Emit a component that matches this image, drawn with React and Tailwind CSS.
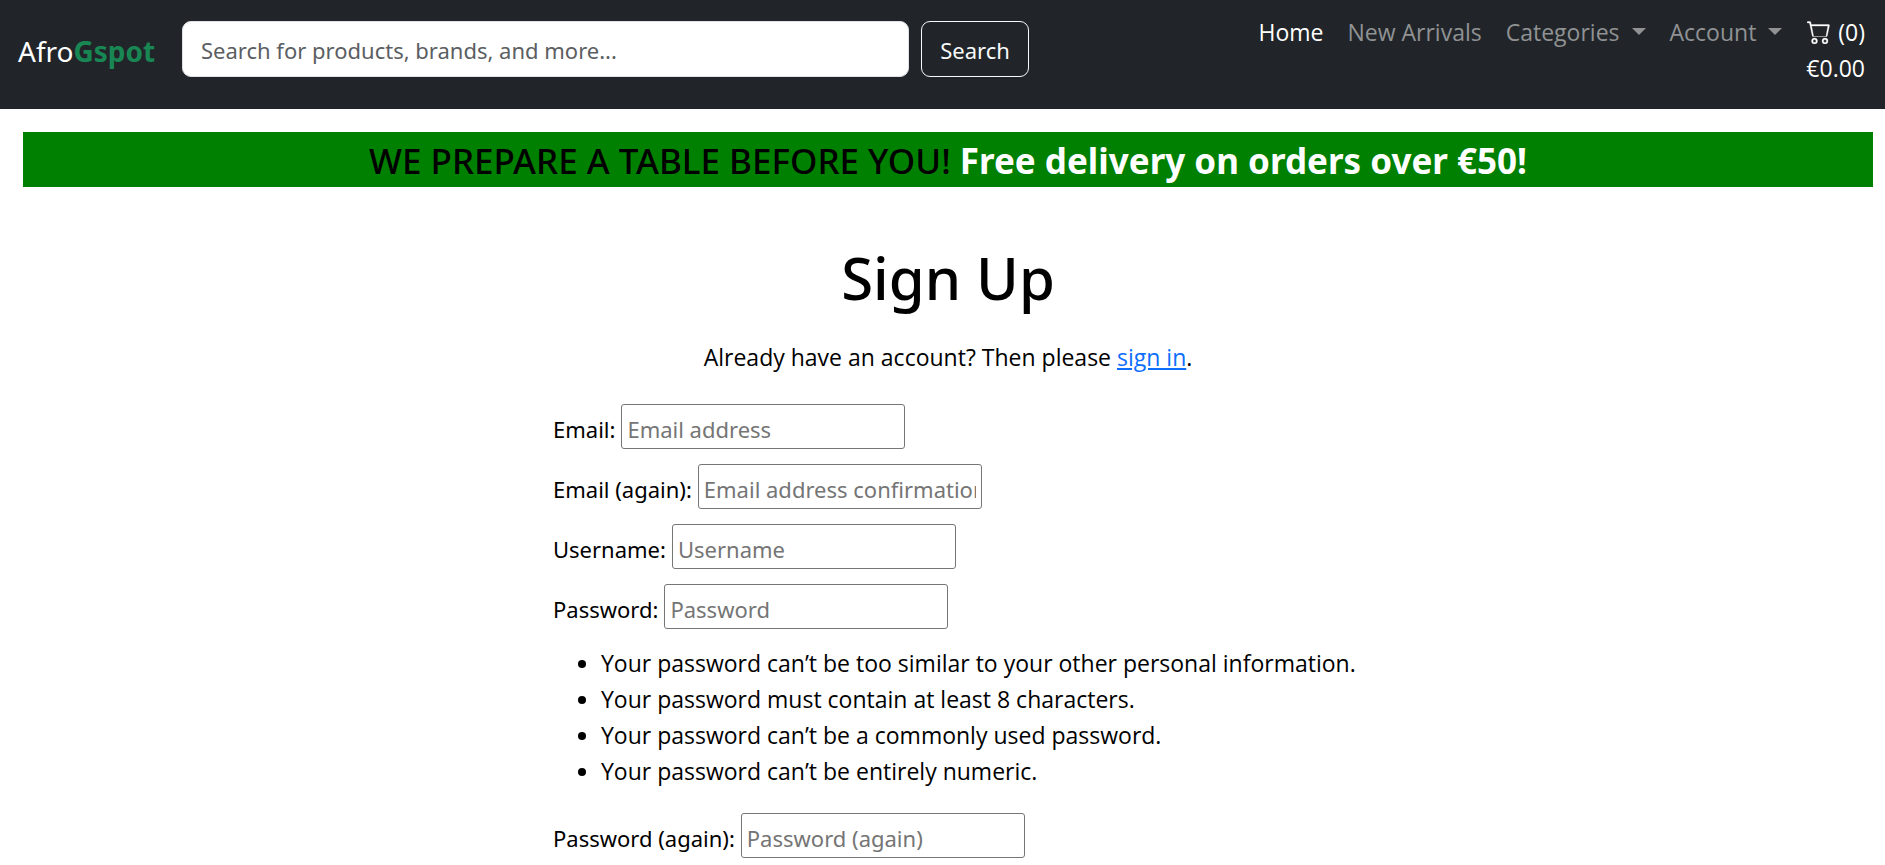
import React from "react";

const rules = [
  "Your password can’t be too similar to your other personal information.",
  "Your password must contain at least 8 characters.",
  "Your password can’t be a commonly used password.",
  "Your password can’t be entirely numeric.",
];

function Caret() {
  return (
    <svg className="mb-0.5 h-[7px] w-[14px]" viewBox="0 0 14 7" aria-hidden="true">
      <path d="M0 0h14L7 7z" fill="currentColor" />
    </svg>
  );
}

function CartIcon() {
  return (
    <svg className="size-6" viewBox="0 0 16 16" fill="currentColor" stroke="currentColor" strokeWidth="0.2" aria-hidden="true">
      <path d="M0 1.5A.5.5 0 0 1 .5 1H2a.5.5 0 0 1 .485.379L2.89 3H14.5a.5.5 0 0 1 .49.598l-1.5 7A.5.5 0 0 1 13 11H4a.5.5 0 0 1-.491-.408L2.01 3.607 1.61 2H.5a.5.5 0 0 1-.5-.5M3.102 4l1.313 7h8.17l1.313-7zM5 12a2 2 0 1 0 0 4 2 2 0 0 0 0-4m7 0a2 2 0 1 0 0 4 2 2 0 0 0 0-4m-7 1a1 1 0 1 1 0 2 1 1 0 0 1 0-2m7 0a1 1 0 1 1 0 2 1 1 0 0 1 0-2" />
    </svg>
  );
}

function Field({ id, label, type = "text", placeholder }) {
  return (
    <div className="flex items-center gap-[6px]">
      <label htmlFor={id} className="pt-1">{label}</label>
      <input
        id={id}
        type={type}
        placeholder={placeholder}
        className="h-[45px] w-[284px] rounded-[3px] border border-[#767676] bg-white px-[5px] pt-1 placeholder:text-[#757575]"
      />
    </div>
  );
}

export default function App() {
  return (
    <div className="min-h-screen bg-white font-['Noto_Sans',sans-serif] text-[22px] leading-9 text-black">
      <nav className="flex h-[109px] items-start bg-[#212529] pl-[18px] pr-5 text-white">
        <a href="#" className="mt-7 w-[164px] shrink-0 text-[28px] leading-[46px]">
          Afro<span className="font-bold text-[#198754]">Gspot</span>
        </a>
        <form className="mt-[21px] flex gap-3" role="search">
          <input
            type="search"
            aria-label="Search products"
            placeholder="Search for products, brands, and more..."
            className="h-14 w-[727px] rounded-[9px] border border-[#dee2e6] bg-white px-[18px] pt-0.5 text-black placeholder:text-[#5b5e62]"
          />
          <button type="button" className="h-14 w-[108px] rounded-[9px] border border-[#f8f9fa] pt-0.5 text-[#f8f9fa]">
            Search
          </button>
        </form>
        <ul className="ml-auto mt-[14px] flex gap-6 font-['Open_Sans',sans-serif] text-[23px] text-[#909294]">
          <li><a href="#" className="text-white">Home</a></li>
          <li><a href="#">New Arrivals</a></li>
          <li>
            <button type="button" className="flex items-center gap-3">Categories<Caret /></button>
          </li>
          <li>
            <button type="button" className="flex items-center gap-3">Account<Caret /></button>
          </li>
          <li>
            <a href="#" className="flex flex-col items-end text-white">
              <span className="flex items-center gap-[7px]"><CartIcon />(0)</span>
              <span>€0.00</span>
            </a>
          </li>
        </ul>
      </nav>

      <main className="pl-[23px] pr-3 pt-[23px]">
        <h2 className="bg-[#008000] pb-[3px] pt-[5px] text-center text-[35px] font-medium leading-[47px]">
          WE PREPARE A TABLE BEFORE YOU! <strong className="font-bold text-white">Free delivery on orders over €50!</strong>
        </h2>
        <h1 className="mt-[55px] text-center text-[58px] font-medium leading-[72px]">Sign Up</h1>
        <p className="mt-[25px] text-center font-['Open_Sans',sans-serif] text-[23px]">
          Already have an account? Then please <a href="#" className="text-[#0d6efd] underline">sign in</a>.
        </p>
        <form className="mx-auto mt-[29px] flex w-[790px] flex-col gap-[15px]">
          <Field id="email" label="Email:" type="email" placeholder="Email address" />
          <Field id="email2" label="Email (again):" type="email" placeholder="Email address confirmation" />
          <Field id="username" label="Username:" placeholder="Username" />
          <Field id="password" label="Password:" type="password" placeholder="Password" />
          <ul className="mb-[9px] mt-px list-disc whitespace-nowrap pl-12 font-['Open_Sans',sans-serif] text-[23px]">
            {rules.map((rule) => <li key={rule}>{rule}</li>)}
          </ul>
          <Field id="password2" label="Password (again):" type="password" placeholder="Password (again)" />
        </form>
      </main>
    </div>
  );
}
